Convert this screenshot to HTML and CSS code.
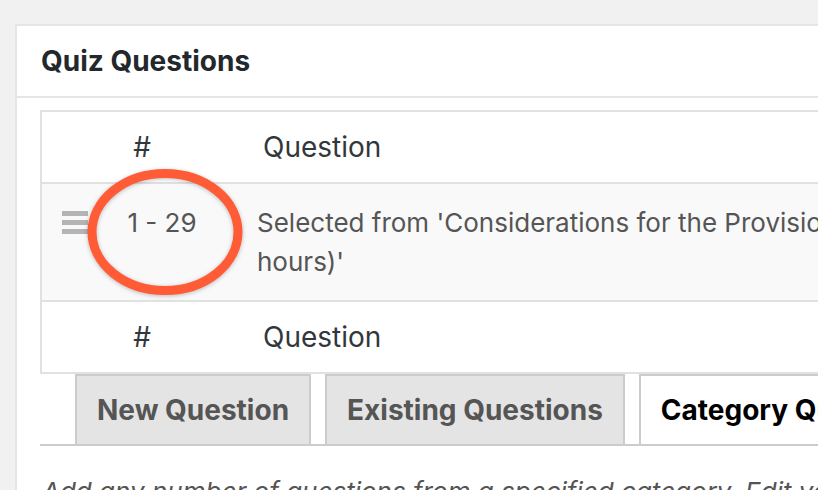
FILE: index.html
```
<!DOCTYPE html>
<html lang="en">
<head>
  <meta charset="UTF-8" />
  <title>Quiz Questions</title>
  <link rel="stylesheet" href="styles.css">
</head>
<body>
  <div class="postbox">
    <h2 class="postbox-title">Quiz Questions</h2>

    <div class="inside">
      <div class="question-table">
        <div class="q-row q-head">
          <div class="col-num">#</div>
          <div class="col-question">Question</div>
        </div>

        <div class="q-row q-item">
          <div class="col-num">
            <span class="handle"><i></i><i></i><i></i></span>
            <span class="num">1 - 29</span>
          </div>
          <div class="col-question">Selected from 'Considerations for the Provision of Care (CE hours)'</div>
        </div>

        <div class="q-row q-head">
          <div class="col-num">#</div>
          <div class="col-question">Question</div>
        </div>
      </div>

      <div class="tabs">
        <a class="tab">New Question</a>
        <a class="tab">Existing Questions</a>
        <a class="tab active">Category Questions</a>
      </div>

      <p class="hint">Add any number of questions from a specified category. Edit your question settings.</p>
    </div>
  </div>

  <!-- highlight ring -->
  <svg class="mark" width="160" height="132" viewBox="0 0 160 132">
    <ellipse cx="80" cy="66" rx="73" ry="58.5" fill="none" stroke="#ff5b37" stroke-width="9" />
  </svg>
</body>
</html>
```

FILE: styles.css
```
body {
  margin: 0;
  background: #f1f1f1;
  font-family: Inter, "Open Sans", sans-serif;
  overflow: hidden;
  height: 490px;
}

.postbox {
  margin: 24px 0 0 15px;
  width: 1100px;
  background: #fff;
  border: 2px solid #e5e5e5;
}

.postbox-title {
  margin: 0;
  padding: 0 24px;
  height: 70px;
  line-height: 70px;
  font-size: 28px;
  font-weight: 700;
  color: #23282d;
  border-bottom: 2px solid #e5e5e5;
}

.inside {
  padding: 12px 0 0 23px;
}

.question-table {
  border: 2px solid #e1e1e1;
  width: 1000px;
}

.q-row {
  display: grid;
  grid-template-columns: 200px 1fr;
  font-size: 26px;
}

.q-head {
  height: 70px;
  align-items: center;
  color: #32373c;
  font-size: 28px;
}

.q-head .col-num {
  text-align: center;
}

.q-head .col-question {
  padding-left: 21px;
}

.q-item {
  background: #f9f9f9;
  border-top: 2px solid #e1e1e1;
  border-bottom: 2px solid #e1e1e1;
  padding: 19px 0;
  line-height: 39px;
  color: #555;
}

.q-item .col-num {
  display: flex;
  align-items: center;
  height: 39px;
  padding-left: 20px;
}

.q-item .col-question {
  padding-left: 15px;
  width: 745px;
}

.handle {
  display: flex;
  flex-direction: column;
  gap: 4px;
  width: 26px;
}

.handle i {
  display: block;
  height: 5px;
  background: #b4b4b4;
}

.num {
  flex: 1;
  text-align: center;
  padding-right: 6px;
}

.tabs {
  display: flex;
  gap: 14px;
  padding-left: 35px;
  border-bottom: 2px solid #ccc;
}

.tab {
  height: 68px;
  line-height: 68px;
  padding: 0 20px;
  border: 2px solid #ccc;
  border-bottom: none;
  background: #e4e4e4;
  color: #555;
  font-size: 28px;
  font-weight: 700;
  white-space: nowrap;
}

.tab.active {
  background: #fff;
  color: #000;
}

.hint {
  margin: 30px 0 0 2px;
  font-size: 26px;
  font-style: italic;
  color: #555;
  white-space: nowrap;
}

.mark {
  position: absolute;
  left: 85px;
  top: 166px;
  filter: drop-shadow(0 1px 2px rgba(0, 0, 0, 0.25));
}
```
